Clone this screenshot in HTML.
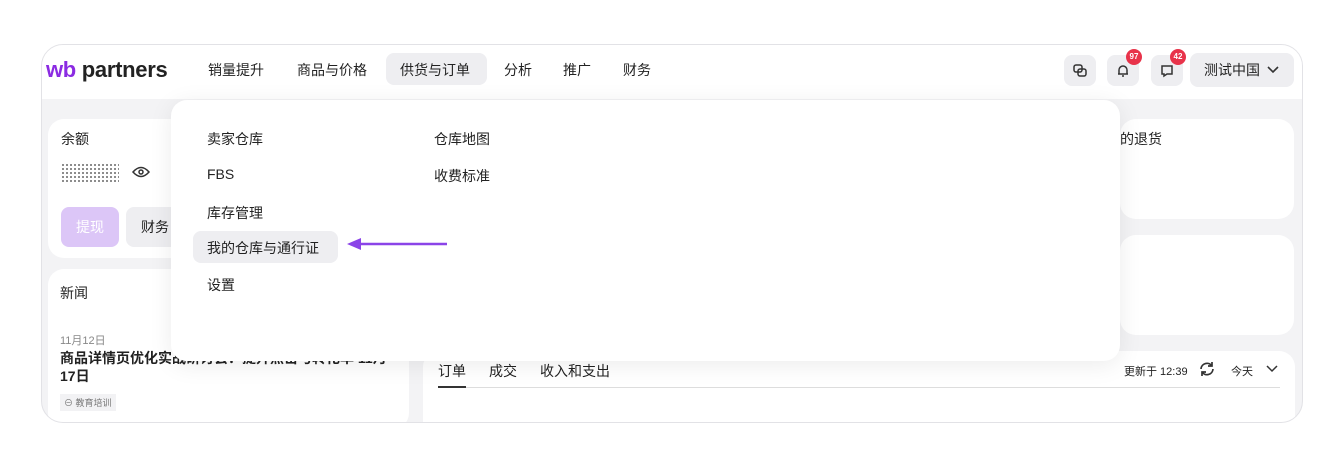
<!DOCTYPE html>
<html><head><meta charset="utf-8"><style>
*{box-sizing:border-box;margin:0;padding:0}
body{width:1344px;height:466px;background:#fff;font-family:"Liberation Sans","Noto Sans CJK SC",sans-serif;color:#222;position:relative;overflow:hidden;font-size:14px}
.frame{position:absolute;left:41px;top:44px;width:1262px;height:379px;border:1px solid #e2e2e6;border-radius:22px;overflow:hidden;background:#f3f3f5}
.hdr{position:absolute;left:0;top:0;width:100%;height:54px;background:#fff}
.a{position:absolute}
.card{position:absolute;background:#fff;border-radius:16px}
.btn{position:absolute;background:#eeeef1;border-radius:8px}
.badge{position:absolute;width:16px;height:16px;border-radius:50%;background:#e8334a;color:#fff;font-size:8px;font-weight:bold;text-align:center;line-height:16px}
.dd{position:absolute;left:171px;top:100px;width:949px;height:261px;background:#fff;border-radius:16px;box-shadow:0 4px 24px rgba(0,0,0,.08)}
.dd .i{position:absolute;font-size:14px;color:#222}
</style></head><body>
<div class="frame">
<div class="hdr">
 <div class="a" style="left:4px;top:12px;font-size:22px;font-weight:bold;letter-spacing:-0.3px"><span style="color:#8b2be2">wb</span> <span style="color:#222">partners</span></div>
 <div class="a" style="left:166px;top:15px">销量提升</div>
 <div class="a" style="left:255px;top:15px">商品与价格</div>
 <div class="btn" style="left:344px;top:8px;width:101px;height:32px"></div>
 <div class="a" style="left:358px;top:15px">供货与订单</div>
 <div class="a" style="left:462px;top:15px">分析</div>
 <div class="a" style="left:521px;top:15px">推广</div>
 <div class="a" style="left:581px;top:15px">财务</div>
 <div class="btn" style="left:1022px;top:10px;width:32px;height:31px"></div>
 <svg class="a" style="left:1030px;top:18px" width="16" height="16" viewBox="0 0 16 16" fill="none" stroke="#333" stroke-width="1.5"><rect x="2" y="2" width="8" height="7" rx="2"/><rect x="6" y="6" width="8" height="7" rx="2"/></svg>
 <div class="btn" style="left:1065px;top:10px;width:32px;height:31px"></div>
 <svg class="a" style="left:1073px;top:18px" width="16" height="16" viewBox="0 0 16 16" fill="none" stroke="#333" stroke-width="1.5"><path d="M4 11V7a4 4 0 0 1 8 0v4H3h10M7 13h2"/></svg>
 <div class="badge" style="left:1084px;top:4px">97</div>
 <div class="btn" style="left:1109px;top:10px;width:32px;height:31px"></div>
 <svg class="a" style="left:1117px;top:18px" width="16" height="16" viewBox="0 0 16 16" fill="none" stroke="#333" stroke-width="1.5"><path d="M3 3h10v8H8l-3 2v-2H3z"/></svg>
 <div class="badge" style="left:1128px;top:4px">42</div>
 <div class="btn" style="left:1148px;top:8px;width:104px;height:34px"></div>
 <div class="a" style="left:1162px;top:15px">测试中国</div>
 <svg class="a" style="left:1224px;top:19px" width="14" height="12" viewBox="0 0 14 12" fill="none" stroke="#333" stroke-width="1.6"><path d="M2 3l5 5 5-5"/></svg>
</div>
<div class="card" style="left:6px;top:74px;width:372px;height:139px">
 <div class="a" style="left:13px;top:10px">余额</div>
 <div class="a" style="left:13px;top:44px;width:58px;height:20px;background:radial-gradient(circle,#555 0.8px,transparent 1.2px) 0 0/4px 4px;opacity:.8"></div>
 <svg class="a" style="left:84px;top:46px" width="18" height="14" viewBox="0 0 18 14" fill="none" stroke="#333" stroke-width="1.5"><path d="M1 7q8-9 16 0q-8 9-16 0z"/><circle cx="9" cy="7" r="2"/></svg>
 <div class="a" style="left:13px;top:88px;width:58px;height:40px;background:#dcc6f7;border-radius:8px;color:#fff;text-align:center;line-height:40px">提现</div>
 <div class="a" style="left:78px;top:88px;width:80px;height:40px;background:#eeeef1;border-radius:8px;padding-left:15px;line-height:40px">财务</div>
</div>
<div class="card" style="left:6px;top:224px;width:361px;height:160px">
 <div class="a" style="left:12px;top:14px">新闻</div>
 <div class="a" style="left:12px;top:63px;font-size:11px;color:#888">11月12日</div>
 <div class="a" style="left:12px;top:80px;font-weight:bold;width:330px;line-height:18px">商品详情页优化实战研讨会：提升点击与转化率 11月17日</div>
 <div class="a" style="left:12px;top:125px;font-size:9px;color:#777;background:#f2f2f4;padding:2px 4px">⊖ 教育培训</div>
</div>
<div class="card" style="left:1078px;top:74px;width:174px;height:100px"><div class="a" style="left:0;top:10px">的退货</div></div>
<div class="card" style="left:1078px;top:190px;width:174px;height:100px"></div>
<div class="card" style="left:381px;top:306px;width:872px;height:90px">
 <div class="a" style="left:15px;top:10px">订单</div>
 <div class="a" style="left:66px;top:10px">成交</div>
 <div class="a" style="left:117px;top:10px">收入和支出</div>
 <div class="a" style="left:15px;top:36px;width:842px;height:1px;background:#ddd"></div>
 <div class="a" style="left:15px;top:35px;width:28px;height:2px;background:#333"></div>
 <div class="a" style="left:701px;top:12px;font-size:11px">更新于 12:39</div>
 <svg class="a" style="left:775px;top:9px" width="18" height="18" viewBox="0 0 18 18" fill="none" stroke="#333" stroke-width="1.7"><path d="M3 9a6 6 0 0 1 11-3M15 9a6 6 0 0 1-11 3M14 2v4h-4M4 16v-4h4"/></svg>
 <div class="a" style="left:808px;top:12px;font-size:11px">今天</div>
 <svg class="a" style="left:842px;top:13px" width="14" height="10" viewBox="0 0 14 10" fill="none" stroke="#333" stroke-width="1.5"><path d="M2 2l5 5 5-5"/></svg>
</div>
</div>
<div class="dd">
 <div class="i" style="left:36px;top:29px">卖家仓库</div>
 <div class="i" style="left:36px;top:66px">FBS</div>
 <div class="i" style="left:36px;top:103px">库存管理</div>
 <div class="a" style="left:22px;top:131px;width:145px;height:32px;background:#eeeef1;border-radius:8px"></div>
 <div class="i" style="left:36px;top:138px">我的仓库与通行证</div>
 <div class="i" style="left:36px;top:175px">设置</div>
 <div class="i" style="left:263px;top:29px">仓库地图</div>
 <div class="i" style="left:263px;top:66px">收费标准</div>
 <svg class="a" style="left:176px;top:136px" width="102" height="16" viewBox="0 0 102 16"><path d="M10 8H100" stroke="#8b44e8" stroke-width="2.5"/><path d="M0 8L14 2v12z" fill="#8b44e8"/></svg>
</div>
</body></html>
